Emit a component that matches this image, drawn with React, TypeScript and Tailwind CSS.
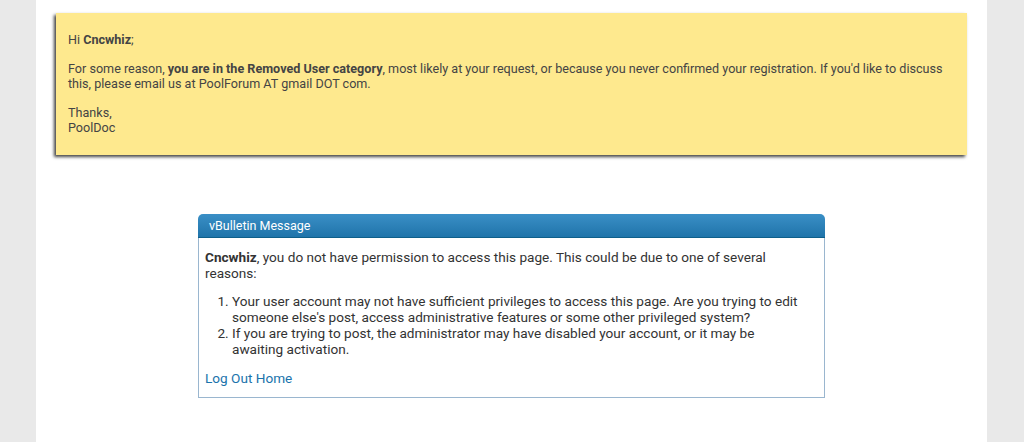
export default function App() {
  return (
    <div className="min-h-screen bg-[#e9e9e9] font-['Roboto',sans-serif] text-[#333]">
      <div className="mx-[36px] mr-[37px] min-h-[442px] bg-white pt-[13px] pb-[45px]">
        {/* Notice banner */}
        <div className="mx-[20px] bg-[#fee98e] px-[12px] pt-[19px] pb-[20px] text-[12.6px] leading-[15px] text-[#444] shadow-[-2px_2px_3px_#444]">
          <p>
            Hi <b>Cncwhiz</b>;
          </p>
          <p className="mt-[14px]">
            For some reason, <b>you are in the Removed User category</b>, most likely at your request, or because you never
            confirmed your registration. If you'd like to discuss this, please email us at PoolForum AT gmail DOT com.
          </p>
          <p className="mt-[14px]">
            Thanks,
            <br />
            PoolDoc
          </p>
        </div>

        {/* vBulletin message box */}
        <div className="mx-auto mt-[59px] w-[627px]">
          <div className="h-[24px] rounded-t-[5px] border-b border-[#0e5f8a] bg-gradient-to-b from-[#3a8fc6] to-[#1f74aa] pl-[11px] text-[12.5px] leading-[24px] text-white">
            vBulletin Message
          </div>
          <div className="border border-t-0 border-[#9ab6cf] px-[6px] pt-[11px] pb-[11px] text-[13.6px] leading-[16px] text-[#333]">
            <p>
              <b>Cncwhiz</b>, you do not have permission to access this page. This could be due to one of several reasons:
            </p>
            <ol className="mt-[12px] list-decimal pl-[27px] pr-[14px]">
              <li>
                Your user account may not have sufficient privileges to access this page. Are you trying to edit someone
                else's post, access administrative features or some other privileged system?
              </li>
              <li>
                If you are trying to post, the administrator may have disabled your account, or it may be awaiting
                activation.
              </li>
            </ol>
            <div className="mt-[13px] text-[#1a73ac]">
              <a href="#" className="hover:underline">Log Out</a>{" "}
              <a href="#" className="hover:underline">Home</a>
            </div>
          </div>
        </div>
      </div>
    </div>
  );
}
